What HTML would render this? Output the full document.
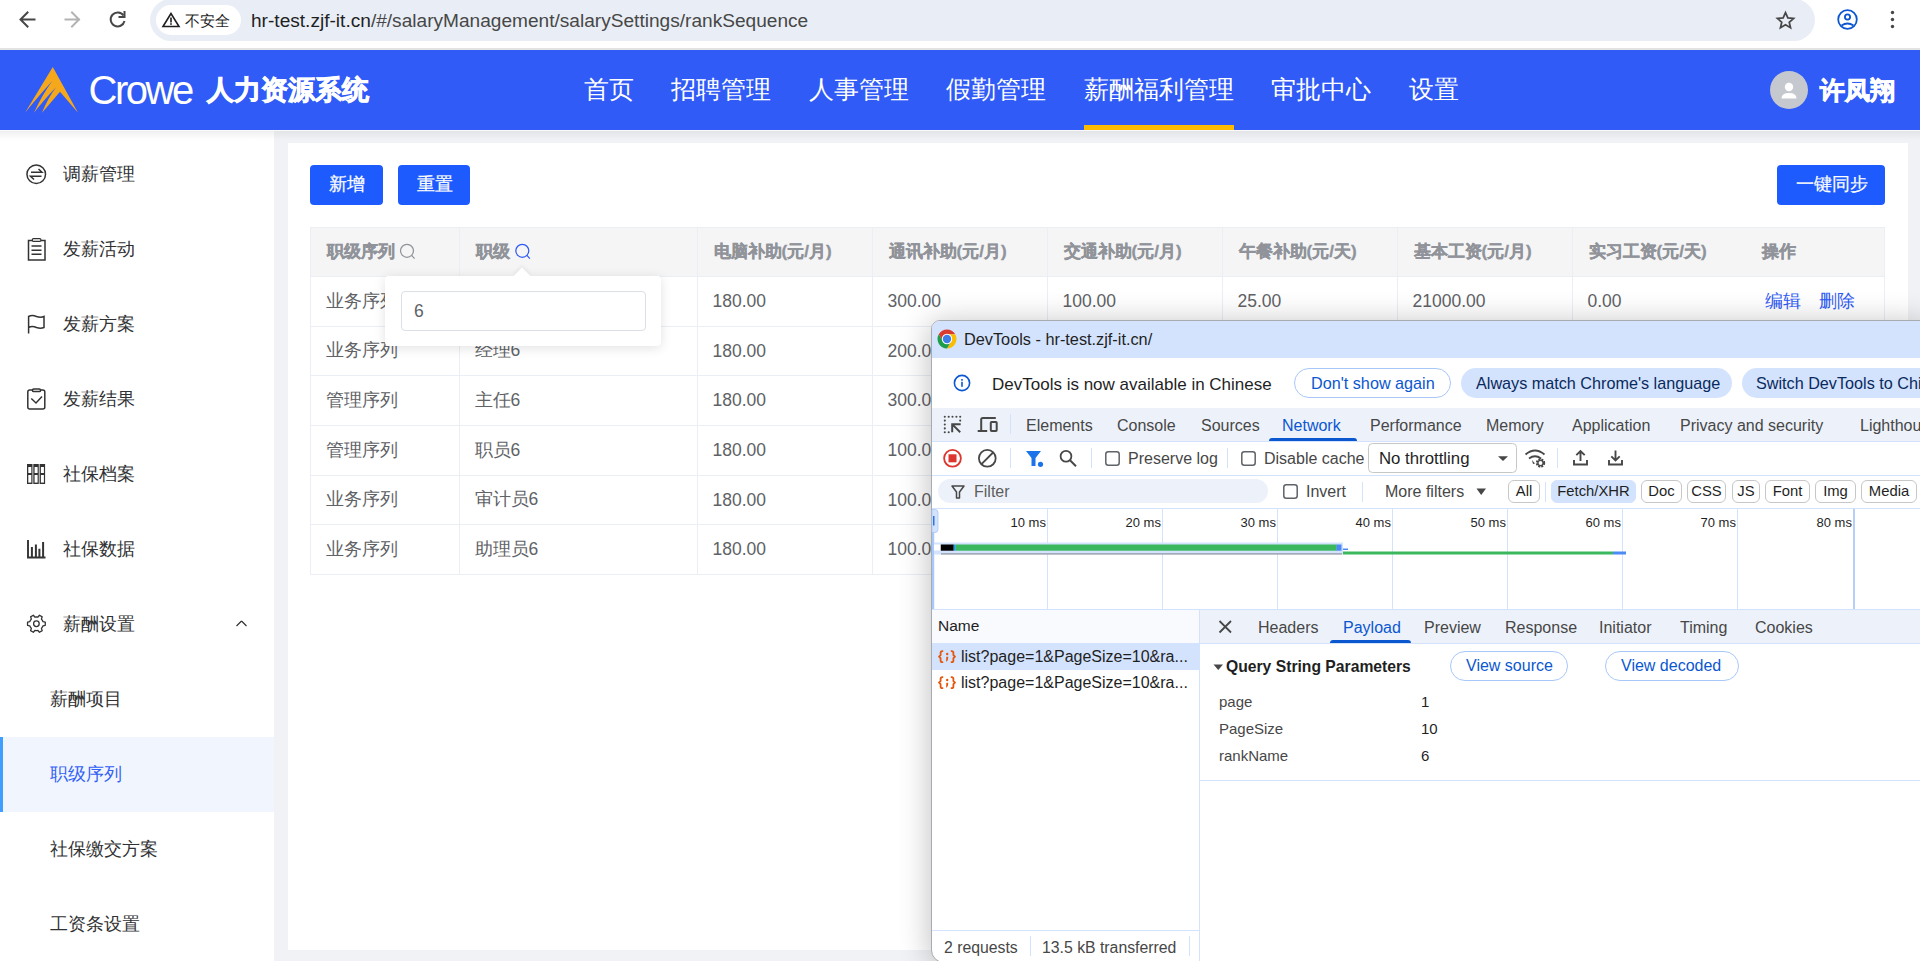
<!DOCTYPE html>
<html><head><meta charset="utf-8">
<style>
*{box-sizing:border-box;margin:0;padding:0}
html,body{width:1920px;height:961px;overflow:hidden}
body{position:relative;background:#f0f2f5;font-family:"Liberation Sans",sans-serif;color:#303133}
.a{position:absolute;white-space:nowrap;line-height:1}
svg{position:absolute;overflow:visible}
/* chrome */
#chrome{position:absolute;left:0;top:0;width:1920px;height:48px;background:#fff}
#chromeline{position:absolute;left:0;top:48px;width:1920px;height:2px;background:#e3e3e3}
#url{position:absolute;left:150px;top:-1px;width:1665px;height:42px;border-radius:21px;background:#e9eef6}
#chip{position:absolute;left:156px;top:5px;width:85px;height:30px;border-radius:15px;background:#fff}
/* header */
#hdr{position:absolute;left:0;top:50px;width:1920px;height:80px;background:#305bf6}
.nav{color:#fff;font-size:25px}
/* sidebar */
#side{position:absolute;left:0;top:130px;width:274px;height:831px;background:#fff}
.si{font-size:18px;color:#303133}
#hshadow{position:absolute;left:0;top:131px;width:1920px;height:9px;background:linear-gradient(rgba(0,0,0,.06),rgba(0,0,0,0));border-top:0}
/* card */
#card{position:absolute;left:288px;top:143px;width:1620px;height:807px;background:#fff}
.btn{position:absolute;background:#1d5bfe;border-radius:4px;color:#fff;font-size:17px}
.th{font-size:17px;font-weight:bold;color:#909399;-webkit-text-stroke:0.35px #909399}
.td{font-size:17.5px;color:#606266}
.dt{font-size:16px;color:#474747}
.tab{font-size:16px;color:#474747}
.ms{font-size:13px;color:#1f1f1f;top:515.5px}
.kv{font-size:15px;color:#474747}
.chip{position:absolute;top:480px;height:23px;border:1px solid #c7c7c7;border-radius:6px;font-size:14.8px;line-height:21px;text-align:center;color:#1f1f1f;white-space:nowrap}
</style></head><body>

<!-- browser chrome -->
<div id="chrome"></div>
<div id="chromeline"></div>
<div id="url"></div>
<div id="chip"></div>
<svg style="left:0;top:0" width="240" height="48">
  <g fill="none" stroke="#474747" stroke-width="2" stroke-linecap="square">
    <path d="M21 19.5 H34.5 M27.5 12.5 L20.5 19.5 L27.5 26.5"/>
  </g>
  <g fill="none" stroke="#b3b3b3" stroke-width="2" stroke-linecap="square">
    <path d="M65.5 19.5 H79 M72 12.5 L79 19.5 L72 26.5"/>
  </g>
  <g fill="none" stroke="#474747" stroke-width="2">
    <path d="M123.5 15.5 A7 7 0 1 0 124.5 21"/>
    <path d="M124.5 12 V17 H119.5" stroke-linecap="square"/>
  </g>
  <g fill="none" stroke="#1f1f1f" stroke-width="1.6">
    <path d="M171 13.5 L163 26.5 H179 Z" stroke-linejoin="miter"/>
  </g>
  <rect x="170.2" y="17.5" width="1.6" height="5" fill="#1f1f1f"/>
  <rect x="170.2" y="23.2" width="1.6" height="1.6" fill="#1f1f1f"/>
</svg>
<div class="a" style="left:185px;top:13px;font-size:15px;color:#1f1f1f">不安全</div>
<div class="a" style="left:251px;top:11px;font-size:19.1px;color:#1f1f1f">hr-test.zjf-it.cn<span style="color:#474747">/#/salaryManagement/salarySettings/rankSequence</span></div>
<svg style="left:1740px;top:0" width="180" height="48">
  <path d="M45.5 11.5 L48.2 17.6 L54.8 18.2 L49.8 22.6 L51.3 29 L45.5 25.6 L39.7 29 L41.2 22.6 L36.2 18.2 L42.8 17.6 Z" transform="translate(45.5 20) scale(0.87) translate(-45.5 -20)" fill="none" stroke="#474747" stroke-width="2" stroke-linejoin="miter"/>
  <circle cx="107.5" cy="19.5" r="9.3" fill="none" stroke="#0b57d0" stroke-width="1.8"/>
  <circle cx="107.5" cy="17" r="2.6" fill="none" stroke="#0b57d0" stroke-width="1.8"/>
  <path d="M101.5 25.5 Q107.5 21.5 113.5 25.5" fill="none" stroke="#0b57d0" stroke-width="1.8"/>
  <circle cx="152.5" cy="12.5" r="1.7" fill="#474747"/>
  <circle cx="152.5" cy="19.5" r="1.7" fill="#474747"/>
  <circle cx="152.5" cy="26.5" r="1.7" fill="#474747"/>
</svg>

<!-- header -->
<div id="hdr"></div>
<svg style="left:0;top:0" width="90" height="130">
  <path d="M52.8 67 L78 112.8 L60 91.8 L42 112.8 Q48 98 56 87.3 Q43 101 34 112.8 Q42 95 52.3 81 Q36 99 25 112.8 Z" fill="#f5a81c"/>
</svg>
<div class="a" style="left:88.6px;top:70.2px;font-size:40px;color:#fff;letter-spacing:-2.5px">Crowe</div>
<div class="a" style="left:206.5px;top:76.5px;font-size:27px;font-weight:bold;color:#fff;-webkit-text-stroke:0.8px #fff">人力资源系统</div>
<div class="a nav" style="left:584px;top:76.5px">首页</div>
<div class="a nav" style="left:671px;top:76.5px">招聘管理</div>
<div class="a nav" style="left:809px;top:76.5px">人事管理</div>
<div class="a nav" style="left:946px;top:76.5px">假勤管理</div>
<div class="a nav" style="left:1084px;top:76.5px">薪酬福利管理</div>
<div class="a nav" style="left:1270.5px;top:76.5px">审批中心</div>
<div class="a nav" style="left:1409px;top:76.5px">设置</div>
<div style="position:absolute;left:1084px;top:125px;width:150px;height:5px;background:#ffbb00"></div>
<div style="position:absolute;left:1770px;top:71px;width:38px;height:38px;border-radius:50%;background:#c5c8ce"></div>
<svg style="left:1770px;top:71px" width="38" height="38">
  <circle cx="19" cy="16" r="4.2" fill="#fff"/>
  <path d="M11.5 27.5 Q11.5 22 19 22 Q26.5 22 26.5 27.5 Z" fill="#fff"/>
</svg>
<div class="a" style="left:1820px;top:78px;font-size:25px;font-weight:bold;color:#fff;-webkit-text-stroke:0.8px #fff">许凤翔</div>

<!-- sidebar -->
<div id="side"></div>
<svg style="left:0;top:0" width="274" height="961">
  <g fill="none" stroke="#333" stroke-width="1.5">
    <circle cx="36.25" cy="174.25" r="9.3"/>
    <path d="M31 172.3 H42 L38.5 169"/>
    <path d="M41.5 176.3 H30.5 L34 179.5"/>
    <path d="M28.5 240.5 H45 V260 H28.5 Z"/>
    <rect x="32.3" y="238.6" width="8.6" height="2.8" rx="1.2" fill="#fff" stroke-width="1.2"/>
    <path d="M31.5 246 H41.5 M31.5 250.2 H41.5 M31.5 254.2 H41.5"/>
    <path d="M28.6 333.5 V316.5 Q32 314.5 36.5 316.5 Q40.5 318 44 316.5 V327.5 Q40.5 329 36.5 327.5 Q32 325.5 28.6 327.5"/>
    <rect x="27.8" y="390" width="17" height="19" rx="2"/>
    <rect x="32.5" y="389" width="8" height="2.6" rx="1.2" fill="#fff"/>
    <path d="M31.3 398.5 L36 403 L42 396.5"/>
    <path d="M28 540 V557.5 H45.5" stroke-width="1.9"/>
    <path d="M31.9 557 V547 M35.9 557 V544.4 M39.4 557 V548.8 M43.1 557 V542" stroke-width="2"/>
    <path d="M241.5 621 L236.5 626 M241.5 621 L246.5 626" stroke-width="1.2"/>
  </g>
  <g fill="#333">
    <path d="M27 464 h5.5 v20 h-5.5 z M33.3 464 h5.5 v20 h-5.5 z M39.6 464 h5.5 v20 h-5.5 z"/>
  </g>
  <g fill="#fff">
    <rect x="28.3" y="467" width="3" height="6"/><rect x="28.3" y="475" width="3" height="7.6"/>
    <rect x="34.6" y="467" width="3" height="6"/><rect x="34.6" y="475" width="3" height="7.6"/>
    <rect x="40.9" y="467" width="3" height="6"/><rect x="40.9" y="475" width="3" height="7.6"/>
  </g>
  <g fill="none" stroke="#333" stroke-width="1.3">
    <path d="M42.38 620.30 L43.00 621.73 L45.26 622.19 L45.26 625.31 L43.00 625.77 L42.38 627.20 L41.45 628.46 L42.19 630.64 L39.48 632.21 L37.95 630.47 L36.40 630.65 L34.85 630.47 L33.32 632.21 L30.61 630.64 L31.35 628.46 L30.42 627.20 L29.80 625.77 L27.54 625.31 L27.54 622.19 L29.80 621.73 L30.42 620.30 L31.35 619.04 L30.61 616.86 L33.32 615.29 L34.85 617.03 L36.40 616.85 L37.95 617.03 L39.48 615.29 L42.19 616.86 L41.45 619.04 Z" stroke-linejoin="round"/>
    <circle cx="36.4" cy="623.75" r="2.8"/>
  </g>
</svg>
<div class="a si" style="left:63px;top:165px">调薪管理</div>
<div class="a si" style="left:63px;top:240px">发薪活动</div>
<div class="a si" style="left:63px;top:315px">发薪方案</div>
<div class="a si" style="left:63px;top:390px">发薪结果</div>
<div class="a si" style="left:63px;top:465px">社保档案</div>
<div class="a si" style="left:63px;top:540px">社保数据</div>
<div class="a si" style="left:63px;top:615px">薪酬设置</div>
<div class="a si" style="left:50px;top:690px">薪酬项目</div>
<div style="position:absolute;left:0;top:737px;width:274px;height:75px;background:#f1f6fe"></div>
<div style="position:absolute;left:0;top:737px;width:3px;height:75px;background:#409eff"></div>
<div class="a si" style="left:50px;top:765px;color:#3461f5">职级序列</div>
<div class="a si" style="left:50px;top:840px">社保缴交方案</div>
<div class="a si" style="left:50px;top:915px">工资条设置</div>
<div id="hshadow"></div><div style="position:absolute;left:0;top:130px;width:1920px;height:1px;background:#fafafa"></div>

<!-- card -->
<div id="card"></div>
<div class="btn" style="left:310px;top:165px;width:73px;height:40px"></div>
<div class="btn" style="left:398px;top:165px;width:72px;height:40px"></div>
<div class="btn" style="left:1777px;top:165px;width:108px;height:40px"></div>
<div class="a" style="left:328.5px;top:175px;font-size:18px;color:#fff;-webkit-text-stroke:0.25px #fff">新增</div>
<div class="a" style="left:416.5px;top:175px;font-size:18px;color:#fff;-webkit-text-stroke:0.25px #fff">重置</div>
<div class="a" style="left:1795.5px;top:175.5px;font-size:17.5px;color:#fff;-webkit-text-stroke:0.2px #fff">一键同步</div>

<!--TABLE-->
<div style="position:absolute;left:310px;top:227px;width:1575px;height:49px;background:#f5f5f6;border-top:1px solid #ebeef5"></div>
<div style="position:absolute;left:310px;top:276px;width:1575px;height:1px;background:#ebeef5"></div>
<div style="position:absolute;left:310px;top:326px;width:1575px;height:1px;background:#ebeef5"></div>
<div style="position:absolute;left:310px;top:375px;width:1575px;height:1px;background:#ebeef5"></div>
<div style="position:absolute;left:310px;top:425px;width:1575px;height:1px;background:#ebeef5"></div>
<div style="position:absolute;left:310px;top:475px;width:1575px;height:1px;background:#ebeef5"></div>
<div style="position:absolute;left:310px;top:524px;width:1575px;height:1px;background:#ebeef5"></div>
<div style="position:absolute;left:310px;top:574px;width:1575px;height:1px;background:#ebeef5"></div>
<div style="position:absolute;left:310px;top:227px;width:1px;height:348px;background:#ebeef5"></div>
<div style="position:absolute;left:459px;top:227px;width:1px;height:348px;background:#ebeef5"></div>
<div style="position:absolute;left:697px;top:227px;width:1px;height:348px;background:#ebeef5"></div>
<div style="position:absolute;left:872px;top:227px;width:1px;height:348px;background:#ebeef5"></div>
<div style="position:absolute;left:1047px;top:227px;width:1px;height:348px;background:#ebeef5"></div>
<div style="position:absolute;left:1222px;top:227px;width:1px;height:348px;background:#ebeef5"></div>
<div style="position:absolute;left:1397px;top:227px;width:1px;height:348px;background:#ebeef5"></div>
<div style="position:absolute;left:1884px;top:227px;width:1px;height:348px;background:#ebeef5"></div>
<div style="position:absolute;left:1572px;top:227px;width:1px;height:348px;background:#ebeef5"></div>
<div class="a th" style="left:326.5px;top:243px">职级序列</div>
<div class="a th" style="left:475.5px;top:243px">职级</div>
<div class="a th" style="left:713.5px;top:243px">电脑补助(元/月)</div>
<div class="a th" style="left:888.5px;top:243px">通讯补助(元/月)</div>
<div class="a th" style="left:1063.5px;top:243px">交通补助(元/月)</div>
<div class="a th" style="left:1238.5px;top:243px">午餐补助(元/天)</div>
<div class="a th" style="left:1413.5px;top:243px">基本工资(元/月)</div>
<div class="a th" style="left:1588.5px;top:243px">实习工资(元/天)</div>
<div class="a th" style="left:1762px;top:243px">操作</div>
<div class="a td" style="left:325.5px;top:292.5px">业务序列</div>
<div class="a td" style="left:474.5px;top:292.5px">经理6</div>
<div class="a td" style="left:712.5px;top:293.0px">180.00</div>
<div class="a td" style="left:887.5px;top:293.0px">300.00</div>
<div class="a td" style="left:1062.5px;top:293.0px">100.00</div>
<div class="a td" style="left:1237.5px;top:293.0px">25.00</div>
<div class="a td" style="left:1412.5px;top:293.0px">21000.00</div>
<div class="a td" style="left:1587.5px;top:293.0px">0.00</div>
<div class="a td" style="left:1765px;top:292.5px;color:#2f5bf5">编辑</div>
<div class="a td" style="left:1819px;top:292.5px;color:#2f5bf5">删除</div>
<div class="a td" style="left:325.5px;top:342.0px">业务序列</div>
<div class="a td" style="left:474.5px;top:342.0px">经理6</div>
<div class="a td" style="left:712.5px;top:342.5px">180.00</div>
<div class="a td" style="left:887.5px;top:342.5px">200.00</div>
<div class="a td" style="left:1062.5px;top:342.5px">100.00</div>
<div class="a td" style="left:1237.5px;top:342.5px">25.00</div>
<div class="a td" style="left:1412.5px;top:342.5px">21000.00</div>
<div class="a td" style="left:1587.5px;top:342.5px">0.00</div>
<div class="a td" style="left:1765px;top:342.0px;color:#2f5bf5">编辑</div>
<div class="a td" style="left:1819px;top:342.0px;color:#2f5bf5">删除</div>
<div class="a td" style="left:325.5px;top:391.5px">管理序列</div>
<div class="a td" style="left:474.5px;top:391.5px">主任6</div>
<div class="a td" style="left:712.5px;top:392.0px">180.00</div>
<div class="a td" style="left:887.5px;top:392.0px">300.00</div>
<div class="a td" style="left:1062.5px;top:392.0px">100.00</div>
<div class="a td" style="left:1237.5px;top:392.0px">25.00</div>
<div class="a td" style="left:1412.5px;top:392.0px">21000.00</div>
<div class="a td" style="left:1587.5px;top:392.0px">0.00</div>
<div class="a td" style="left:1765px;top:391.5px;color:#2f5bf5">编辑</div>
<div class="a td" style="left:1819px;top:391.5px;color:#2f5bf5">删除</div>
<div class="a td" style="left:325.5px;top:441.5px">管理序列</div>
<div class="a td" style="left:474.5px;top:441.5px">职员6</div>
<div class="a td" style="left:712.5px;top:442.0px">180.00</div>
<div class="a td" style="left:887.5px;top:442.0px">100.00</div>
<div class="a td" style="left:1062.5px;top:442.0px">100.00</div>
<div class="a td" style="left:1237.5px;top:442.0px">25.00</div>
<div class="a td" style="left:1412.5px;top:442.0px">21000.00</div>
<div class="a td" style="left:1587.5px;top:442.0px">0.00</div>
<div class="a td" style="left:1765px;top:441.5px;color:#2f5bf5">编辑</div>
<div class="a td" style="left:1819px;top:441.5px;color:#2f5bf5">删除</div>
<div class="a td" style="left:325.5px;top:491.0px">业务序列</div>
<div class="a td" style="left:474.5px;top:491.0px">审计员6</div>
<div class="a td" style="left:712.5px;top:491.5px">180.00</div>
<div class="a td" style="left:887.5px;top:491.5px">100.00</div>
<div class="a td" style="left:1062.5px;top:491.5px">100.00</div>
<div class="a td" style="left:1237.5px;top:491.5px">25.00</div>
<div class="a td" style="left:1412.5px;top:491.5px">21000.00</div>
<div class="a td" style="left:1587.5px;top:491.5px">0.00</div>
<div class="a td" style="left:1765px;top:491.0px;color:#2f5bf5">编辑</div>
<div class="a td" style="left:1819px;top:491.0px;color:#2f5bf5">删除</div>
<div class="a td" style="left:325.5px;top:540.5px">业务序列</div>
<div class="a td" style="left:474.5px;top:540.5px">助理员6</div>
<div class="a td" style="left:712.5px;top:541.0px">180.00</div>
<div class="a td" style="left:887.5px;top:541.0px">100.00</div>
<div class="a td" style="left:1062.5px;top:541.0px">100.00</div>
<div class="a td" style="left:1237.5px;top:541.0px">25.00</div>
<div class="a td" style="left:1412.5px;top:541.0px">21000.00</div>
<div class="a td" style="left:1587.5px;top:541.0px">0.00</div>
<div class="a td" style="left:1765px;top:540.5px;color:#2f5bf5">编辑</div>
<div class="a td" style="left:1819px;top:540.5px;color:#2f5bf5">删除</div>
<svg style="left:0;top:0" width="600" height="300"><g fill="none" stroke-width="1.25"><circle cx="407" cy="250.8" r="6.5" stroke="#909399"/><path d="M411.6 255.4 L414.6 258.6" stroke="#909399"/><circle cx="522.3" cy="250.8" r="6.5" stroke="#2f5bf5"/><path d="M526.9 255.4 L529.9 258.6" stroke="#2f5bf5"/></g></svg>
<div style="position:absolute;left:385px;top:276px;width:276px;height:70px;background:#fff;border-radius:4px;box-shadow:0 2px 12px rgba(0,0,0,.12)"></div>
<div style="position:absolute;left:516px;top:270px;width:12px;height:12px;background:#fff;transform:rotate(45deg);box-shadow:-2px -2px 4px rgba(0,0,0,.05)"></div>
<div style="position:absolute;left:385px;top:276px;width:276px;height:12px;background:#fff;border-radius:4px 4px 0 0"></div>
<div style="position:absolute;left:401px;top:291px;width:245px;height:40px;border:1px solid #dcdfe6;border-radius:4px;background:#fff"></div>
<div class="a td" style="left:414px;top:303px">6</div>
<!--/TABLE-->

<!--DEVTOOLS-->
<!-- devtools window -->
<div style="position:absolute;left:931px;top:320px;width:1000px;height:643px;border-radius:9px 0 0 13px;background:#fff;border:1px solid #a8abaf;box-shadow:-2px 2px 30px rgba(0,0,0,.24)"></div>
<div style="position:absolute;left:932px;top:321px;width:990px;height:37px;background:#d3e3fd;border-radius:8px 0 0 0"></div>
<svg style="left:937px;top:329px" width="20" height="20" viewBox="0 0 20 20">
  <path d="M18.227 5.25 A9.5 9.5 0 0 0 1.773 5.25 L5.886 12.375 A4.75 4.75 0 0 1 10 5.25 Z" fill="#db3a2e"/>
  <path d="M18.227 5.25 A9.5 9.5 0 0 0 1.773 5.25 L5.886 12.375 A4.75 4.75 0 0 1 10 5.25 Z" fill="#fbbc04" transform="rotate(120 10 10)"/>
  <path d="M18.227 5.25 A9.5 9.5 0 0 0 1.773 5.25 L5.886 12.375 A4.75 4.75 0 0 1 10 5.25 Z" fill="#1e9e4a" transform="rotate(240 10 10)"/>
  <circle cx="10" cy="10" r="5.2" fill="#fff"/>
  <circle cx="10" cy="10" r="4.2" fill="#3d7fe6"/>
</svg>
<div class="a dt" style="left:964px;top:331px;font-size:16.3px;color:#1f1f1f">DevTools - hr-test.zjf-it.cn/</div>

<!-- info bar -->
<svg style="left:952px;top:373px" width="20" height="20">
  <circle cx="10" cy="10" r="7.6" fill="none" stroke="#0b57d0" stroke-width="1.6"/>
  <rect x="9.2" y="8.8" width="1.6" height="5" fill="#0b57d0"/>
  <rect x="9.2" y="6" width="1.6" height="1.7" fill="#0b57d0"/>
</svg>
<div class="a" style="left:992px;top:376px;font-size:17px;color:#1f1f1f">DevTools is now available in Chinese</div>
<div style="position:absolute;left:1294px;top:368px;width:157px;height:30px;border:1px solid #a8c7fa;border-radius:15px"></div>
<div class="a" style="left:1311px;top:374.5px;font-size:16.2px;color:#0b57d0">Don't show again</div>
<div style="position:absolute;left:1461px;top:368px;width:271px;height:30px;background:#d3e3fd;border-radius:15px"></div>
<div class="a" style="left:1476px;top:374.5px;font-size:16.2px;color:#0a2a5e">Always match Chrome's language</div>
<div style="position:absolute;left:1742px;top:368px;width:250px;height:30px;background:#d3e3fd;border-radius:15px"></div>
<div class="a" style="left:1756px;top:374.5px;font-size:16.2px;color:#0a2a5e">Switch DevTools to Chinese</div>

<!-- tab bar -->
<div style="position:absolute;left:932px;top:408px;width:990px;height:33px;background:#edf2fa"></div>
<div style="position:absolute;left:932px;top:441px;width:990px;height:1px;background:#d3e3fd"></div>
<svg style="left:0;top:0" width="1920" height="961">
  <g fill="none" stroke="#474747" stroke-width="1.8">
    <circle cx="944.8" cy="416.75" r="1.05" fill="#474747" stroke="none"/><circle cx="944.8" cy="420.6" r="1.05" fill="#474747" stroke="none"/><circle cx="944.8" cy="424.5" r="1.05" fill="#474747" stroke="none"/><circle cx="944.8" cy="428.4" r="1.05" fill="#474747" stroke="none"/><circle cx="944.8" cy="432.2" r="1.05" fill="#474747" stroke="none"/><circle cx="948.7" cy="416.75" r="1.05" fill="#474747" stroke="none"/><circle cx="952.5" cy="416.75" r="1.05" fill="#474747" stroke="none"/><circle cx="956.4" cy="416.75" r="1.05" fill="#474747" stroke="none"/><circle cx="960.2" cy="416.75" r="1.05" fill="#474747" stroke="none"/><circle cx="960.2" cy="420.6" r="1.05" fill="#474747" stroke="none"/><circle cx="948.7" cy="432.2" r="1.05" fill="#474747" stroke="none"/>
    <path d="M952.2 432.3 V424.2 H960.7 M952.6 424.6 L960.2 432.2" stroke-width="2"/>
    <path d="M977.7 431 H987.2 M981.2 431 V419.5 Q981.2 417.9 982.8 417.9 H995.8" stroke-width="2"/>
    <rect x="990.8" y="422" width="5.9" height="9" rx="0.8" stroke-width="2"/>
  </g>
  <rect x="1010" y="414" width="1" height="20" fill="#d3e3fd"/>
</svg>
<div class="a tab" style="left:1026px;top:417.5px">Elements</div>
<div class="a tab" style="left:1117px;top:417.5px">Console</div>
<div class="a tab" style="left:1201px;top:417.5px">Sources</div>
<div class="a tab" style="left:1282px;top:417.5px;color:#0b57d0">Network</div>
<div style="position:absolute;left:1269px;top:438px;width:88px;height:3px;background:#0b57d0;border-radius:3px 3px 0 0"></div>
<div class="a tab" style="left:1370px;top:417.5px">Performance</div>
<div class="a tab" style="left:1486px;top:417.5px">Memory</div>
<div class="a tab" style="left:1572px;top:417.5px">Application</div>
<div class="a tab" style="left:1680px;top:417.5px">Privacy and security</div>
<div class="a tab" style="left:1860px;top:417.5px">Lighthouse</div>

<!-- toolbar -->
<svg style="left:0;top:0" width="1920" height="961">
  <circle cx="952.5" cy="458.3" r="8.4" fill="none" stroke="#dc362e" stroke-width="1.8"/>
  <rect x="948.5" y="454.3" width="8" height="8" fill="#dc362e"/>
  <circle cx="987.3" cy="458.3" r="8.4" fill="none" stroke="#474747" stroke-width="1.8"/>
  <path d="M981.5 464.1 L993.1 452.5" stroke="#474747" stroke-width="1.8"/>
  <rect x="1010" y="448" width="1" height="20" fill="#d3e3fd"/>
  <path d="M1026 451 H1041 L1035.5 458 V466 H1031.5 V458 Z" fill="#1a73e8"/>
  <circle cx="1040.5" cy="464.3" r="2.6" fill="#1a73e8"/>
  <circle cx="1066" cy="456.3" r="5.4" fill="none" stroke="#474747" stroke-width="1.8"/>
  <path d="M1070 460.3 L1076 466.3" stroke="#474747" stroke-width="2"/>
  <rect x="1091" y="448" width="1" height="20" fill="#d3e3fd"/>
  <rect x="1105.8" y="451.8" width="13.4" height="13.4" rx="2.5" fill="none" stroke="#5f6368" stroke-width="1.5"/>
  <rect x="1227" y="448" width="1" height="20" fill="#d3e3fd"/>
  <rect x="1241.8" y="451.8" width="13.4" height="13.4" rx="2.5" fill="none" stroke="#5f6368" stroke-width="1.5"/>
  <rect x="1368.5" y="443.5" width="148" height="29" rx="4" fill="none" stroke="#c7c7c7" stroke-width="1"/>
  <path d="M1498 456.3 H1508 L1503 461 Z" fill="#474747"/>
  <g fill="none" stroke="#474747" stroke-width="1.8">
    <path d="M1525.5 454.5 Q1535 446.5 1544.5 454.5"/>
    <path d="M1529 458.5 Q1535 454 1541 458.5"/>
  </g>
  <path d="M1532 460 L1535 463.5 L1533 464" fill="#474747"/>
  <circle cx="1540.5" cy="463" r="3.6" fill="none" stroke="#474747" stroke-width="2.2" stroke-dasharray="1.9 1"/><circle cx="1540.5" cy="463" r="2.6" fill="none" stroke="#474747" stroke-width="1.3"/>
  <rect x="1557" y="448" width="1" height="20" fill="#d3e3fd"/>
  <g fill="none" stroke="#474747" stroke-width="1.9">
    <path d="M1574 460 V464.5 H1587 V460 M1580.5 461 V451 M1576.3 455.2 L1580.5 451 L1584.7 455.2"/>
    <path d="M1609 460 V464.5 H1622 V460 M1615.5 450.5 V460.5 M1611.3 456.3 L1615.5 460.5 L1619.7 456.3"/>
  </g>
</svg>
<div style="position:absolute;left:932px;top:475px;width:990px;height:1px;background:#d3e3fd"></div>
<div class="a dt" style="left:1128px;top:451px">Preserve log</div>
<div class="a dt" style="left:1264px;top:451px">Disable cache</div>
<div class="a dt" style="left:1379px;top:450.5px;font-size:16.8px;color:#1f1f1f">No throttling</div>

<!-- filter row -->
<div style="position:absolute;left:938px;top:479px;width:330px;height:24px;background:#edf2fa;border-radius:12px"></div>
<svg style="left:0;top:0" width="1920" height="961">
  <path d="M952 486 H964 L959.5 492 V498 H956.5 V492 Z" fill="none" stroke="#474747" stroke-width="1.5" stroke-linejoin="round"/>
  <rect x="1283.8" y="484.8" width="13.4" height="13.4" rx="2.5" fill="none" stroke="#5f6368" stroke-width="1.5"/>
  <rect x="1362" y="482" width="1" height="20" fill="#d3e3fd"/>
  <path d="M1476.5 488.5 H1486 L1481.2 495 Z" fill="#474747"/>
  <rect x="1545" y="482" width="1" height="20" fill="#d3e3fd"/>
</svg>
<div class="a dt" style="left:974px;top:484px;color:#5e5e5e">Filter</div>
<div class="a dt" style="left:1306px;top:484px">Invert</div>
<div class="a dt" style="left:1385px;top:484px">More filters</div>
<div class="chip" style="left:1508px;width:32px">All</div>
<div class="chip" style="left:1551px;width:85px;background:#d3e3fd;border-color:#d3e3fd">Fetch/XHR</div>
<div class="chip" style="left:1641px;width:41px">Doc</div>
<div class="chip" style="left:1687px;width:39px">CSS</div>
<div class="chip" style="left:1732px;width:28px">JS</div>
<div class="chip" style="left:1765px;width:45px">Font</div>
<div class="chip" style="left:1815px;width:41px">Img</div>
<div class="chip" style="left:1861px;width:56px">Media</div>
<div style="position:absolute;left:932px;top:508px;width:990px;height:1px;background:#d3e3fd"></div>

<!-- timeline -->
<svg style="left:0;top:0" width="1920" height="961">
  <g fill="#d3e3fd">
    <rect x="1047" y="509" width="1" height="100"/>
    <rect x="1162" y="509" width="1" height="100"/>
    <rect x="1277" y="509" width="1" height="100"/>
    <rect x="1392" y="509" width="1" height="100"/>
    <rect x="1507" y="509" width="1" height="100"/>
    <rect x="1622" y="509" width="1" height="100"/>
    <rect x="1737" y="509" width="1" height="100"/>
    <rect x="1853" y="509" width="2" height="100" fill="#b5cff8"/>
  </g>
  <rect x="932" y="609" width="990" height="1" fill="#d3e3fd"/>
  <path d="M932 509.5 H935 Q938 509.5 938 512.5 V529.5 Q938 532.5 935 532.5 H932 Z" fill="#d3e3fd" stroke="#a8c7fa" stroke-width="0.8"/>
  <rect x="933.2" y="516" width="1.2" height="9.5" fill="#0b57d0"/>
  <rect x="932" y="532" width="2.2" height="77" fill="#a8c7fa"/>
  <rect x="934" y="542.5" width="409" height="12" fill="#d3e3fd"/>
  <rect x="934" y="544.5" width="7" height="6" fill="#fff"/>
  <rect x="940.75" y="544.5" width="13" height="6.2" fill="#000"/>
  <rect x="953.75" y="544.5" width="2" height="6.2" fill="#1a9be0"/>
  <rect x="955.75" y="544.5" width="381" height="6.2" fill="#3bb75e"/>
  <rect x="1336.5" y="544.5" width="5" height="6.2" fill="#4c8bf5"/>
  <rect x="941" y="553.3" width="401" height="1.2" fill="#8f959b"/>
  <rect x="1343" y="551.5" width="270" height="3" fill="#3bb75e"/>
  <rect x="1613" y="551.5" width="13" height="3" fill="#4c8bf5"/>
  <rect x="1343" y="548.5" width="5" height="1.5" fill="#4c8bf5"/>
</svg>
<div class="a ms" style="left:1010.5px">10 ms</div>
<div class="a ms" style="left:1125.5px">20 ms</div>
<div class="a ms" style="left:1240.5px">30 ms</div>
<div class="a ms" style="left:1355.5px">40 ms</div>
<div class="a ms" style="left:1470.5px">50 ms</div>
<div class="a ms" style="left:1585.5px">60 ms</div>
<div class="a ms" style="left:1700.5px">70 ms</div>
<div class="a ms" style="left:1816.5px">80 ms</div>

<!-- name panel -->
<div style="position:absolute;left:932px;top:610px;width:267px;height:33px;background:#f8fafd"></div>
<div style="position:absolute;left:932px;top:643px;width:267px;height:27px;background:#d3e3fd"></div>
<div style="position:absolute;left:1199px;top:610px;width:1px;height:351px;background:#d3e3fd"></div>
<div style="position:absolute;left:932px;top:930px;width:267px;height:1px;background:#d3e3fd"></div>
<div class="a dt" style="left:938px;top:618px;font-size:15.5px;color:#1f1f1f">Name</div>
<svg style="left:0;top:0" width="1920" height="961">
  <g fill="none" stroke="#e4570c" stroke-width="1.8" stroke-linejoin="round">
    <path d="M943.2 651.2 H942.4 Q940.6 651.2 940.6 653.0 V655.2 L939 656.7 L940.6 658.2 V660.4 Q940.6 662.2 942.4 662.2 H943.2" />
    <path d="M950.8 651.2 H951.6 Q953.4 651.2 953.4 653.0 V655.2 L955 656.7 L953.4 658.2 V660.4 Q953.4 662.2 951.6 662.2 H950.8" />
    <path d="M943.2 677.2 H942.4 Q940.6 677.2 940.6 679.0 V681.2 L939 682.7 L940.6 684.2 V686.4 Q940.6 688.2 942.4 688.2 H943.2" />
    <path d="M950.8 677.2 H951.6 Q953.4 677.2 953.4 679.0 V681.2 L955 682.7 L953.4 684.2 V686.4 Q953.4 688.2 951.6 688.2 H950.8" />
  </g>
  <g fill="#e4570c">
    <circle cx="947.2" cy="654" r="1.2"/><path d="M946.3 656.8 h2 l-0.4 3.3 l-1.8 1.8 z"/>
    <circle cx="947.2" cy="680" r="1.2"/><path d="M946.3 682.8 h2 l-0.4 3.3 l-1.8 1.8 z"/>
  </g>
  <rect x="1030" y="936" width="1" height="20" fill="#d3e3fd"/>
  <rect x="1189" y="936" width="1" height="20" fill="#d3e3fd"/>
</svg>
<div class="a dt" style="left:961px;top:649px;font-size:16px;color:#1f1f1f">list?page=1&amp;PageSize=10&amp;ra...</div>
<div class="a dt" style="left:961px;top:675px;font-size:16px;color:#1f1f1f">list?page=1&amp;PageSize=10&amp;ra...</div>
<div class="a dt" style="left:944px;top:939.5px;font-size:15.8px">2 requests</div>
<div class="a dt" style="left:1042px;top:939.5px;font-size:15.8px">13.5 kB transferred</div>

<!-- details panel -->
<div style="position:absolute;left:1200px;top:610px;width:722px;height:33px;background:#edf2fa"></div>
<div style="position:absolute;left:1200px;top:643px;width:722px;height:1px;background:#d3e3fd"></div>
<svg style="left:0;top:0" width="1920" height="961">
  <path d="M1219.5 621 L1231 632.5 M1231 621 L1219.5 632.5" stroke="#474747" stroke-width="1.8"/>
  <path d="M1213.5 664.5 H1223 L1218.25 670 Z" fill="#474747"/>
</svg>
<div class="a tab" style="left:1258px;top:620px">Headers</div>
<div class="a tab" style="left:1343px;top:620px;color:#0b57d0">Payload</div>
<div style="position:absolute;left:1330px;top:640px;width:81px;height:3px;background:#0b57d0;border-radius:3px 3px 0 0"></div>
<div class="a tab" style="left:1424px;top:620px">Preview</div>
<div class="a tab" style="left:1505px;top:620px">Response</div>
<div class="a tab" style="left:1599px;top:620px">Initiator</div>
<div class="a tab" style="left:1680px;top:620px">Timing</div>
<div class="a tab" style="left:1755px;top:620px">Cookies</div>
<div class="a" style="left:1226px;top:658.5px;font-size:15.7px;font-weight:bold;color:#1f1f1f">Query String Parameters</div>
<div style="position:absolute;left:1450px;top:651px;width:118px;height:30px;border:1px solid #a8c7fa;border-radius:15px"></div>
<div class="a" style="left:1466px;top:658px;font-size:16px;color:#0b57d0">View source</div>
<div style="position:absolute;left:1605px;top:651px;width:134px;height:30px;border:1px solid #a8c7fa;border-radius:15px"></div>
<div class="a" style="left:1621px;top:658px;font-size:16px;color:#0b57d0">View decoded</div>
<div class="a kv" style="left:1219px;top:694px">page</div>
<div class="a kv" style="left:1219px;top:721px">PageSize</div>
<div class="a kv" style="left:1219px;top:748px">rankName</div>
<div class="a kv" style="left:1421px;top:694px;color:#1f1f1f">1</div>
<div class="a kv" style="left:1421px;top:721px;color:#1f1f1f">10</div>
<div class="a kv" style="left:1421px;top:748px;color:#1f1f1f">6</div>
<div style="position:absolute;left:1200px;top:780px;width:722px;height:1px;background:#d3e3fd"></div>

<!--/DEVTOOLS-->
</body></html>
